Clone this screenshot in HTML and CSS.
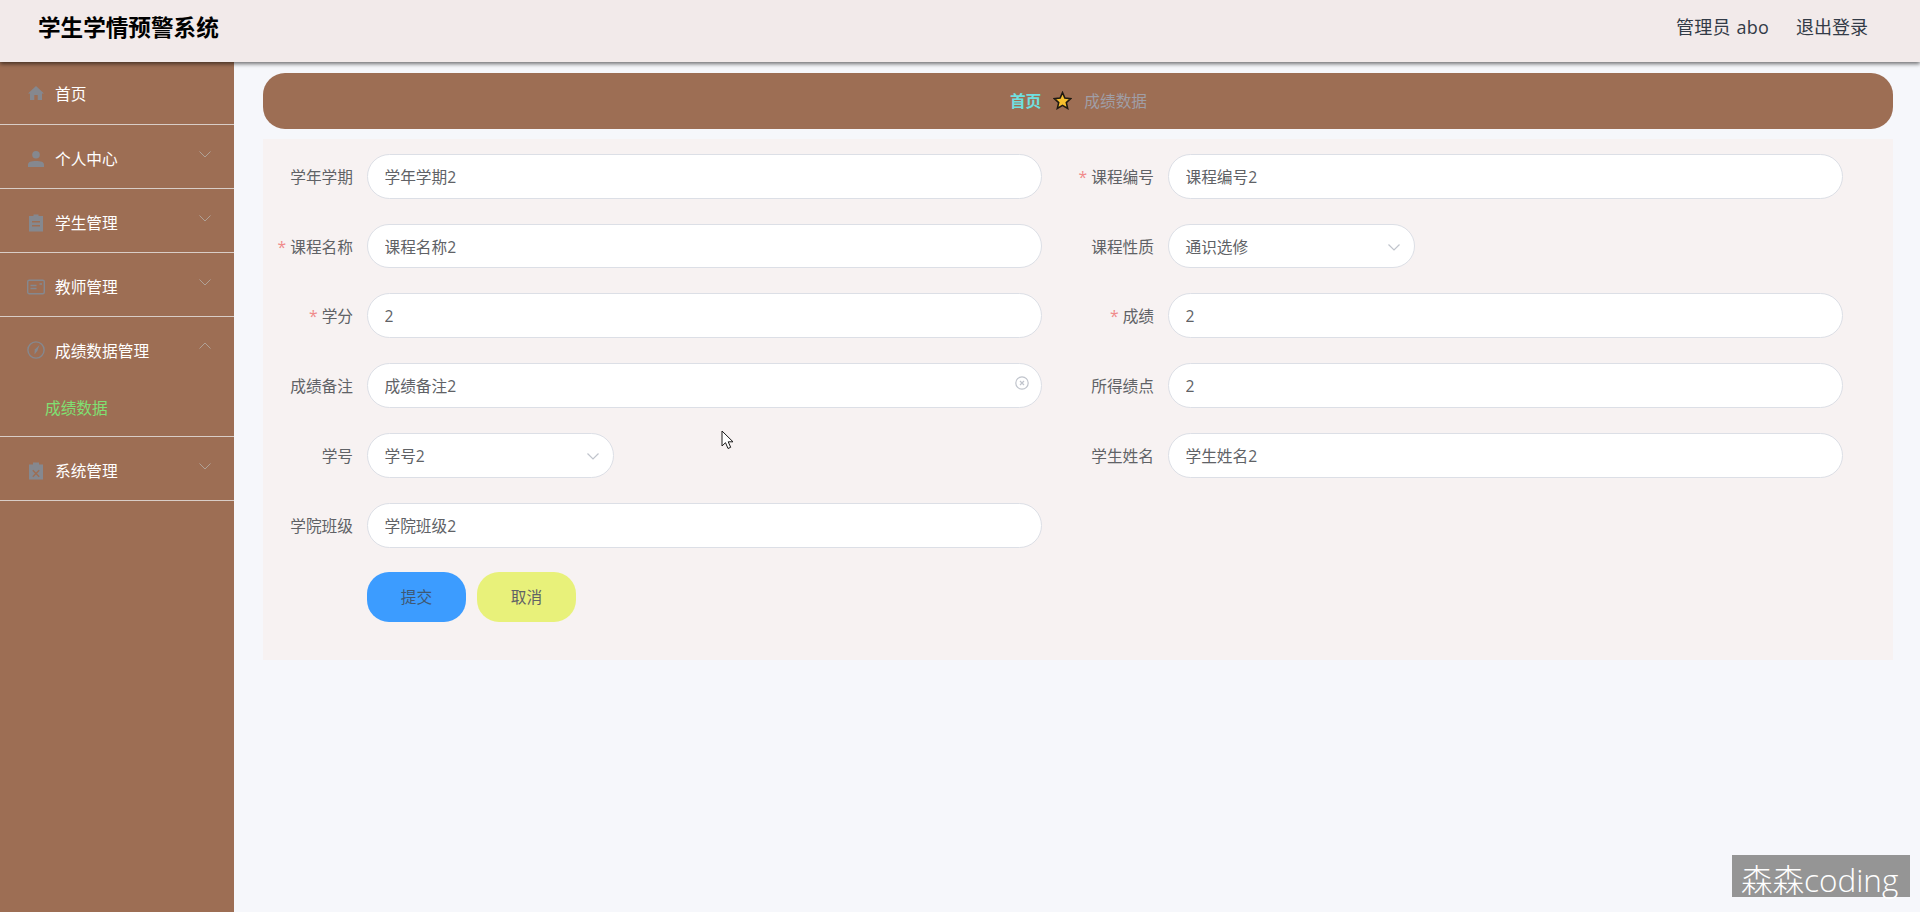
FILE: index.html
```html
<!DOCTYPE html>
<html lang="zh-CN">
<head>
<meta charset="utf-8">
<title>学生学情预警系统</title>
<link rel="stylesheet" href="styles.css">
</head>
<body>
<header class="topbar">
  <div class="brand">学生学情预警系统</div>
  <div class="account"><span>管理员 abo</span><span>退出登录</span></div>
</header>
<div class="shell">
  <aside class="sidebar">
    <div class="nav-item nav-plain">
      <svg class="nav-icon" viewBox="0 0 18 18"><path d="M9 2 1 9.500H3V16H7.300V11H10.700V16H15V9.500H17Z"/></svg>
      <span>首页</span>
    </div>
    <div class="nav-item">
      <svg class="nav-icon" viewBox="0 0 18 18"><circle cx="9" cy="4.800" r="3.800"/><path d="M1 17V14.500C1 12 4 11 9 11S17 12 17 14.500V17Z"/></svg>
      <span>个人中心</span>
      <svg class="chev" viewBox="0 0 12 7"><path d="M0.500 0.500 6 6 11.500 0.500"/></svg>
    </div>
    <div class="nav-item">
      <svg class="nav-icon" viewBox="0 0 18 18"><path d="M6.500 0.500H11.500V2H16V17.500H2V2H6.500ZM5 7V8.500H13V7ZM5 11V12.500H13V11Z" fill-rule="evenodd"/></svg>
      <span>学生管理</span>
      <svg class="chev" viewBox="0 0 12 7"><path d="M0.500 0.500 6 6 11.500 0.500"/></svg>
    </div>
    <div class="nav-item">
      <svg class="nav-icon nav-icon-line" viewBox="0 0 18 18"><rect x="0.700" y="2.200" width="16.600" height="13.600" rx="1.500"/><path d="M3.500 7.500H9.500M3.500 10.500H9.500M12.500 6H15"/></svg>
      <span>教师管理</span>
      <svg class="chev" viewBox="0 0 12 7"><path d="M0.500 0.500 6 6 11.500 0.500"/></svg>
    </div>
    <div class="nav-item nav-open">
      <svg class="nav-icon nav-icon-line" viewBox="0 0 18 18"><circle cx="9" cy="9" r="8.100"/><path class="needle" d="M12.500 4 10.300 10 7.500 13.500 7.800 8.500Z"/></svg>
      <span>成绩数据管理</span>
      <svg class="chev" viewBox="0 0 12 7"><path d="M0.500 6.500 6 1 11.500 6.500"/></svg>
    </div>
    <div class="nav-sub"><span>成绩数据</span></div>
    <div class="nav-item">
      <svg class="nav-icon" viewBox="0 0 18 18"><path d="M6 0.500H12V2.500H16V17.500H2V2.500H6ZM6.300 7.800 5.300 8.800 8 11.500 5.300 14.200 6.300 15.200 9 12.500 11.700 15.200 12.700 14.200 10 11.500 12.700 8.800 11.700 7.800 9 10.500Z" fill-rule="evenodd"/></svg>
      <span>系统管理</span>
      <svg class="chev" viewBox="0 0 12 7"><path d="M0.500 0.500 6 6 11.500 0.500"/></svg>
    </div>
  </aside>
  <main class="content">
    <nav class="crumbs">
      <span class="crumb-home">首页</span>
      <svg class="crumb-star" viewBox="0 0 24 24"><path d="M12 2 15 8.900 22.400 9.600 16.800 14.600 18.500 22 12 18.100 5.500 22 7.200 14.600 1.600 9.600 9 8.900Z"/></svg>
      <span class="crumb-current">成绩数据</span>
    </nav>
    <form class="panel">
      <div class="field"><label class="field-label">学年学期</label><input class="pill" value="学年学期2"></div>
      <div class="field"><label class="field-label req">课程编号</label><input class="pill" value="课程编号2"></div>
      <div class="field"><label class="field-label req">课程名称</label><input class="pill" value="课程名称2"></div>
      <div class="field"><label class="field-label">课程性质</label>
        <div class="pill pill-select"><span>通识选修</span><svg class="select-chev" viewBox="0 0 12 7"><path d="M0.500 0.500 6 6 11.500 0.500"/></svg></div></div>
      <div class="field"><label class="field-label req">学分</label><input class="pill" value="2"></div>
      <div class="field"><label class="field-label req">成绩</label><input class="pill" value="2"></div>
      <div class="field"><label class="field-label">成绩备注</label>
        <div class="clearable"><input class="pill" value="成绩备注2"><svg class="clear" viewBox="0 0 14 14"><circle cx="7" cy="7" r="6.200"/><path d="M5 5 9 9M9 5 5 9"/></svg></div></div>
      <div class="field"><label class="field-label">所得绩点</label><input class="pill" value="2"></div>
      <div class="field"><label class="field-label">学号</label>
        <div class="pill pill-select"><span>学号2</span><svg class="select-chev" viewBox="0 0 12 7"><path d="M0.500 0.500 6 6 11.500 0.500"/></svg></div></div>
      <div class="field"><label class="field-label">学生姓名</label><input class="pill" value="学生姓名2"></div>
      <div class="field"><label class="field-label">学院班级</label><input class="pill" value="学院班级2"></div>
      <div class="actions">
        <button type="button" class="btn btn-submit">提交</button>
        <button type="button" class="btn btn-cancel">取消</button>
      </div>
    </form>
  </main>
</div>
<svg class="cursor" viewBox="0 0 13 20"><path d="M1 1V16L4.500 12.700 7 18.500 9.700 17.300 7.200 11.800H12Z"/></svg>
<div class="watermark">森森coding</div>
</body>
</html>
```

FILE: styles.css
```css
* { box-sizing: border-box; }
html, body { margin: 0; height: 912px; overflow: hidden; }
body {
  display: flex;
  flex-direction: column;
  background: #f6f7fb;
  font-family: "Open Sans", "Noto Sans CJK SC", sans-serif;
  color: #606266;
  font-size: 15.7px;
}
.topbar {
  position: relative;
  z-index: 2;
  flex: none;
  height: 62px;
  display: flex;
  justify-content: space-between;
  align-items: center;
  padding: 0 52px 10px 38px;
  background: #f2eaea;
  box-shadow: 0 2px 4px rgba(0, 0, 0, .55);
}
.brand { font-size: 22.600px; font-weight: 700; color: #000; }
.account { display: flex; gap: 27px; font-size: 18px; color: #333b47; }
.account span:first-child { word-spacing: 1px; letter-spacing: .2px; }
.shell { flex: 1; display: flex; min-height: 0; }
.sidebar { flex: none; width: 234px; background: #9d6e54; color: #fff; }
.nav-item {
  height: 64px;
  display: flex;
  align-items: center;
  padding: 4px 23px 0 27px;
  border-bottom: 1px solid #d9cdc7;
  font-size: 15.7px;
}
.nav-plain { height: 63px; padding-top: 0; }
.nav-open { padding-top: 2px; border-bottom: 0; }
.nav-icon { width: 18px; height: 18px; margin-right: 10px; flex: none; fill: #85888f; }
.nav-icon-line { fill: none; stroke: #85888f; stroke-width: 1.400; }
.needle { fill: #85888f; stroke: none; }
.chev { width: 12px; height: 7px; margin-left: auto; margin-bottom: 9px; fill: none; stroke: #b0a196; stroke-width: 1; }
.nav-sub {
  height: 56px;
  padding: 0 0 2px 45px;
  display: flex;
  align-items: center;
  border-bottom: 1px solid #d9cdc7;
  color: #7fe072;
  font-size: 15.7px;
}
.content { flex: 1; min-width: 0; padding: 11px 27px 0 29px; }
.crumbs {
  height: 56px;
  display: flex;
  justify-content: center;
  align-items: center;
  gap: 12px;
  background: #9d6e54;
  border-radius: 22px;
  padding: 0 0 2px 1px;
}
.crumb-home { color: #6fe0e0; font-weight: 700; }
.crumb-star { width: 19px; height: 19px; fill: #f7c02e; stroke: #1f1a12; stroke-width: 2; }
.crumb-current { color: #a09ea6; }
.panel {
  margin-top: 10px;
  height: 521px;
  padding-top: 14.900px;
  display: grid;
  grid-template-columns: 801px 801px;
  grid-auto-rows: 44.800px;
  row-gap: 25px;
  align-content: start;
  background: #f7f2f2;
}
.field { display: grid; grid-template-columns: 90px 675px; column-gap: 14px; align-items: center; }
.field-label { text-align: right; white-space: nowrap; color: #606266; }
.req::before { content: "*"; color: #f08a8a; margin-right: 4px; }
.pill {
  display: block;
  width: 100%;
  height: 44.800px;
  padding: 0 17px 0 16.500px;
  border: 1px solid #dcdfe6;
  border-radius: 22.400px;
  background: #fff;
  color: #606266;
  font: inherit;
  outline: none;
}
.pill-select { width: 247px; display: flex; align-items: center; justify-content: space-between; padding-right: 14px; }
.select-chev { width: 12px; height: 7px; fill: none; stroke: #c0c4cc; stroke-width: 1.200; margin-top: 2px; }
.clearable { position: relative; }
.clear {
  position: absolute;
  right: 13px;
  top: 13px;
  width: 14px;
  height: 14px;
  fill: none;
  stroke: #c0c4cc;
  stroke-width: 1.200;
}
.actions { grid-column: 1 / -1; display: flex; gap: 11px; padding-left: 104px; margin-top: -1px; }
.btn {
  width: 99px;
  height: 50px;
  border: 0;
  border-radius: 22px;
  font: inherit;
  padding: 0;
}
.btn-submit { background: #3c9cff; color: #3f5873; }
.btn-cancel { background: #e8f17a; color: #606266; }
.cursor {
  position: absolute;
  left: 721px;
  top: 430px;
  width: 13px;
  height: 20px;
  fill: #fff;
  stroke: #1a1a1a;
  stroke-width: 1;
}
.watermark {
  position: absolute;
  left: 1732px;
  top: 855px;
  width: 178px;
  height: 42px;
  padding-left: 9px;
  background: #959595;
  color: #fff;
  font-size: 31.500px;
  font-weight: 300;
  line-height: 50px;
  white-space: nowrap;
}
```
